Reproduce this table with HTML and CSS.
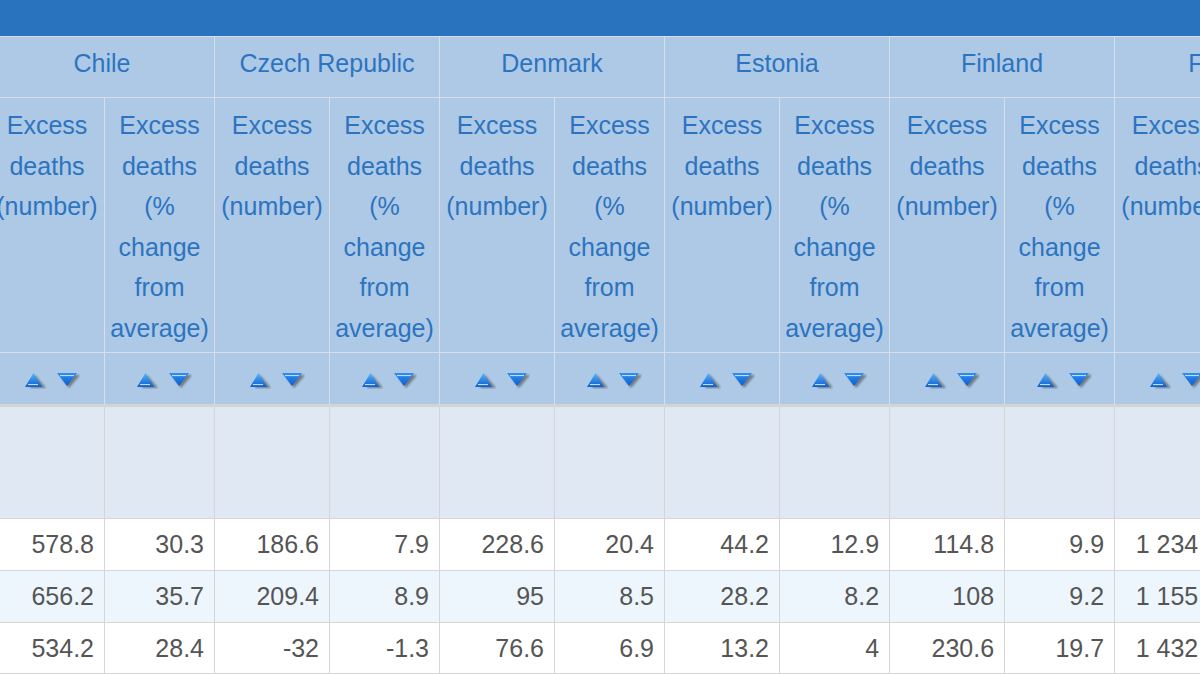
FILE: index.html
```html
<!DOCTYPE html>
<html lang="en">
<head>
<meta charset="utf-8">
<title>Excess deaths</title>
<link rel="stylesheet" href="styles.css">
</head>
<body>
<svg class="defs" width="0" height="0" aria-hidden="true">
  <defs>
    <linearGradient id="gUp" x1="0" y1="0" x2="0" y2="1">
      <stop offset="0" stop-color="#5ab4f7"/>
      <stop offset="1" stop-color="#0b5fd0"/>
    </linearGradient>
    <linearGradient id="gDn" x1="0" y1="0" x2="0" y2="1">
      <stop offset="0" stop-color="#2f8ff0"/>
      <stop offset="1" stop-color="#0b5fd0"/>
    </linearGradient>
    <filter id="blur" x="-30%" y="-30%" width="160%" height="160%">
      <feGaussianBlur stdDeviation="0.9"/>
    </filter>
    <symbol id="up" viewBox="0 0 22 17">
      <polygon points="11,3 22,16 6,16" fill="#5e5e5e" opacity="0.75" filter="url(#blur)"/>
      <polygon points="9.5,1 18,15 1,15" fill="url(#gUp)"/>
      <line x1="4" y1="12.6" x2="14" y2="12.6" stroke="#cfe6ff" stroke-width="1"/>
    </symbol>
    <symbol id="dn" viewBox="0 0 24 17">
      <polygon points="4,3 24,3 13,16" fill="#5e5e5e" opacity="0.75" filter="url(#blur)"/>
      <polygon points="1,1 21,1 11,14" fill="url(#gDn)"/>
      <line x1="4" y1="3.6" x2="18" y2="3.6" stroke="#cfe6ff" stroke-width="1"/>
    </symbol>
  </defs>
</svg>

<div class="topbar"></div>
<div class="viewport">
<table class="grid">
  <colgroup>
    <col class="c1"><col class="c2">
    <col class="c1"><col class="c2">
    <col class="c1"><col class="c2">
    <col class="c1"><col class="c2">
    <col class="c1"><col class="c2">
    <col class="c1"><col class="c2">
  </colgroup>
  <thead>
    <tr class="r-country">
      <th colspan="2">Chile</th>
      <th colspan="2">Czech Republic</th>
      <th colspan="2">Denmark</th>
      <th colspan="2">Estonia</th>
      <th colspan="2">Finland</th>
      <th colspan="2">France</th>
    </tr>
    <tr class="r-sub">
      <th>Excess deaths (number)</th><th>Excess deaths (% change from average)</th>
      <th>Excess deaths (number)</th><th>Excess deaths (% change from average)</th>
      <th>Excess deaths (number)</th><th>Excess deaths (% change from average)</th>
      <th>Excess deaths (number)</th><th>Excess deaths (% change from average)</th>
      <th>Excess deaths (number)</th><th>Excess deaths (% change from average)</th>
      <th>Excess deaths (number)</th><th>Excess deaths (% change from average)</th>
    </tr>
    <tr class="r-sort">
      <th><span class="sort"><svg class="ic-up"><use href="#up"/></svg><svg class="ic-dn"><use href="#dn"/></svg></span></th>
      <th><span class="sort"><svg class="ic-up"><use href="#up"/></svg><svg class="ic-dn"><use href="#dn"/></svg></span></th>
      <th><span class="sort"><svg class="ic-up"><use href="#up"/></svg><svg class="ic-dn"><use href="#dn"/></svg></span></th>
      <th><span class="sort"><svg class="ic-up"><use href="#up"/></svg><svg class="ic-dn"><use href="#dn"/></svg></span></th>
      <th><span class="sort"><svg class="ic-up"><use href="#up"/></svg><svg class="ic-dn"><use href="#dn"/></svg></span></th>
      <th><span class="sort"><svg class="ic-up"><use href="#up"/></svg><svg class="ic-dn"><use href="#dn"/></svg></span></th>
      <th><span class="sort"><svg class="ic-up"><use href="#up"/></svg><svg class="ic-dn"><use href="#dn"/></svg></span></th>
      <th><span class="sort"><svg class="ic-up"><use href="#up"/></svg><svg class="ic-dn"><use href="#dn"/></svg></span></th>
      <th><span class="sort"><svg class="ic-up"><use href="#up"/></svg><svg class="ic-dn"><use href="#dn"/></svg></span></th>
      <th><span class="sort"><svg class="ic-up"><use href="#up"/></svg><svg class="ic-dn"><use href="#dn"/></svg></span></th>
      <th><span class="sort"><svg class="ic-up"><use href="#up"/></svg><svg class="ic-dn"><use href="#dn"/></svg></span></th>
      <th><span class="sort"><svg class="ic-up"><use href="#up"/></svg><svg class="ic-dn"><use href="#dn"/></svg></span></th>
    </tr>
  </thead>
  <tbody>
    <tr class="r-empty">
      <td></td><td></td><td></td><td></td><td></td><td></td>
      <td></td><td></td><td></td><td></td><td></td><td></td>
    </tr>
    <tr class="r-data">
      <td>578.8</td><td>30.3</td><td>186.6</td><td>7.9</td><td>228.6</td><td>20.4</td>
      <td>44.2</td><td>12.9</td><td>114.8</td><td>9.9</td><td>1 234.6</td><td>7.2</td>
    </tr>
    <tr class="r-data alt">
      <td>656.2</td><td>35.7</td><td>209.4</td><td>8.9</td><td>95</td><td>8.5</td>
      <td>28.2</td><td>8.2</td><td>108</td><td>9.2</td><td>1 155.2</td><td>6.8</td>
    </tr>
    <tr class="r-data">
      <td>534.2</td><td>28.4</td><td>-32</td><td>-1.3</td><td>76.6</td><td>6.9</td>
      <td>13.2</td><td>4</td><td>230.6</td><td>19.7</td><td>1 432.4</td><td>8.5</td>
    </tr>
  </tbody>
</table>
</div>
</body>
</html>
```

FILE: styles.css
```css
html, body {
  margin: 0;
  padding: 0;
}

body {
  width: 1200px;
  height: 675px;
  overflow: hidden;
  background: #ffffff;
  font-family: "Liberation Sans", Arial, sans-serif;
}

.defs {
  position: absolute;
  width: 0;
  height: 0;
  overflow: hidden;
}

.topbar {
  height: 36px;
  background: #2872be;
  border-bottom: 1px solid #d6dee8;
}

.viewport {
  width: 1200px;
  overflow: hidden;
}

.grid {
  margin-left: -10px;
  border-collapse: separate;
  border-spacing: 0;
  table-layout: fixed;
  width: 1350px;
  font-size: 25px;
}

.c1 { width: 115px; }
.c2 { width: 110px; }

.grid th,
.grid td {
  box-sizing: border-box;
  border-right: 1px solid #d9dfe6;
  border-bottom: 1px solid #d9dfe6;
  padding: 0;
}

.grid th {
  background: #adc9e6;
  color: #2c74c0;
  font-weight: normal;
  text-align: center;
}

.r-country { height: 61px; }
.r-country th {
  vertical-align: top;
  line-height: 40px;
  padding-top: 6px;
}

.r-sub { height: 255px; }
.r-sub th {
  vertical-align: top;
  line-height: 40.5px;
  padding: 7px 3px 0;
}

.r-sort { height: 54px; }
.r-sort th {
  border-bottom: 3px solid #d2d4d6;
  vertical-align: middle;
  padding: 3px 0 0 9px;
  line-height: 0;
}

.sort {
  display: inline-flex;
  align-items: center;
  gap: 10px;
}

.ic-up {
  width: 22px;
  height: 17px;
}

.ic-dn {
  width: 24px;
  height: 17px;
}

.grid td {
  border-color: #d6d6d6;
  color: #555555;
  text-align: right;
  white-space: nowrap;
  padding-right: 10px;
}

.r-empty { height: 112px; }
.r-empty td { background: #dfe8f3; }

.r-data { height: 52px; }
.r-data td { background: #ffffff; }
.r-data.alt td { background: #eef6fd; }
.r-data:last-child { height: 51px; }
```
